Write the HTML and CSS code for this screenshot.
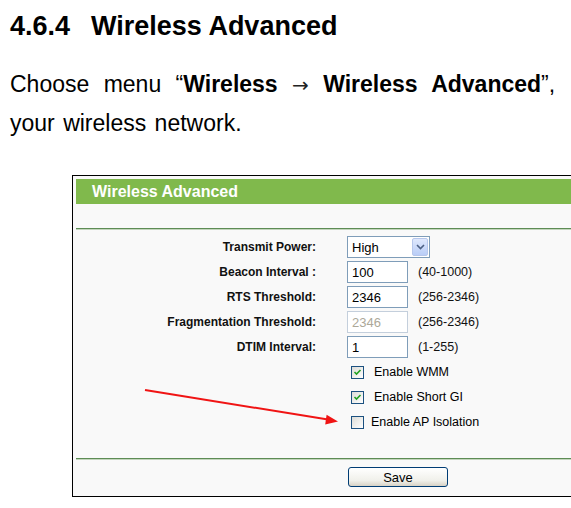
FILE: index.html
```html
<!DOCTYPE html>
<html lang="en">
<head>
    <meta charset="UTF-8">
    <meta name="viewport" content="width=device-width, initial-scale=1.0">
    <title>Wireless Advanced</title>
    <link rel="stylesheet" href="styles.css">
</head>
<body>
    <h1 class="section-title"><span class="section-num">4.6.4</span>Wireless Advanced</h1>

    <div class="intro">
        <div class="intro-line first">Choose menu “<b>Wireless</b> <span class="menu-arrow">→</span> <b>Wireless Advanced</b>”,</div>
        <div class="intro-line">your wireless network.</div>
    </div>

    <div class="shot">
        <div class="panel">
            <div class="panel-title">Wireless Advanced</div>
            <div class="panel-gap"></div>
            <div class="rule"></div>

            <div class="form">
                <div class="label">Transmit Power:</div>
                <div class="field">
                    <div class="fake-select">
                        <span class="fake-select-value">High</span>
                        <span class="fake-select-btn">
                            <svg width="9" height="6" viewBox="0 0 9 6"><path d="M1 1 L4.5 4.5 L8 1" fill="none" stroke="#4d6185" stroke-width="1.6"/></svg>
                        </span>
                    </div>
                </div>

                <div class="label">Beacon Interval :</div>
                <div class="field"><input class="txt" type="text" value="100"><span class="hint">(40-1000)</span></div>

                <div class="label">RTS Threshold:</div>
                <div class="field"><input class="txt" type="text" value="2346"><span class="hint">(256-2346)</span></div>

                <div class="label">Fragmentation Threshold:</div>
                <div class="field"><input class="txt" type="text" value="2346" disabled><span class="hint">(256-2346)</span></div>

                <div class="label">DTIM Interval:</div>
                <div class="field"><input class="txt" type="text" value="1"><span class="hint">(1-255)</span></div>

                <div class="label"></div>
                <div class="field check-field">
                    <span class="box checked"><svg width="9" height="8" viewBox="0 0 9 8"><path d="M1.5 4 L3.5 6 L7.5 2" fill="none" stroke="#21a121" stroke-width="1.6"/></svg></span>
                    <span class="check-text">Enable WMM</span>
                </div>

                <div class="label"></div>
                <div class="field check-field">
                    <span class="box checked"><svg width="9" height="8" viewBox="0 0 9 8"><path d="M1.5 4 L3.5 6 L7.5 2" fill="none" stroke="#21a121" stroke-width="1.6"/></svg></span>
                    <span class="check-text">Enable Short GI</span>
                </div>

                <div class="label"></div>
                <div class="field check-field">
                    <span class="box"></span>
                    <span class="check-text tight">Enable AP Isolation</span>
                </div>
            </div>

            <div class="rule bottom-rule"></div>
            <div class="actions">
                <button class="save-btn">Save</button>
            </div>
        </div>
    </div>

    <svg class="pointer" width="571" height="508" viewBox="0 0 571 508">
        <line x1="145" y1="390" x2="328" y2="419.5" stroke="#f01414" stroke-width="2"/>
        <polygon points="338,421.5 326.6,414.8 325.2,424.4" fill="#f01414"/>
    </svg>
</body>
</html>
```

FILE: styles.css
```css
body {
    margin: 0;
    padding: 0;
    background: #ffffff;
    color: #000000;
    font-family: "Liberation Sans", Arial, sans-serif;
    width: 571px;
    overflow: hidden;
    position: relative;
}

.section-title {
    margin: 11px 0 0 10px;
    font-size: 27px;
    line-height: 30px;
    font-weight: bold;
    white-space: nowrap;
}

.section-num {
    margin-right: 21px;
}

.intro {
    margin: 24px 0 0 10px;
    font-size: 23px;
    line-height: 38px;
    white-space: nowrap;
}

.intro-line {
    word-spacing: 2px;
}

.intro-line.first {
    word-spacing: 8px;
}

.menu-arrow {
    font-family: "DejaVu Sans", sans-serif;
    font-size: 20px;
    word-spacing: 0;
    color: #222;
}

.shot {
    margin: 33px 0 0 72px;
    border-left: 1px solid #000;
    border-top: 1px solid #000;
    border-bottom: 1px solid #000;
    width: 520px;
}

.panel {
    background: #f9f9f9;
    padding: 3px 0 9px 3px;
}

.panel-title {
    height: 25px;
    line-height: 25px;
    background: #80b94c;
    color: #ffffff;
    font-size: 16px;
    font-weight: bold;
    padding-left: 16px;
}

.panel-gap {
    height: 24px;
}

.rule {
    height: 1px;
    background: #5d8c55;
    border-bottom: 1px solid #c3d5bd;
}

.form {
    display: grid;
    grid-template-columns: 240px 1fr;
    column-gap: 31px;
    row-gap: 3px;
    grid-auto-rows: 22px;
    margin-top: 6px;
}

.label {
    text-align: right;
    font-size: 12px;
    font-weight: bold;
    line-height: 22px;
    white-space: nowrap;
    color: #111;
}

.field {
    display: flex;
    align-items: center;
    gap: 10px;
    font-size: 12.5px;
}

.fake-select {
    box-sizing: border-box;
    width: 83px;
    height: 22px;
    border: 1px solid #7f9db9;
    background: #fff;
    display: flex;
    align-items: center;
    justify-content: space-between;
    padding: 1px 1px 1px 4px;
}

.fake-select-value {
    font-size: 13px;
}

.fake-select-btn {
    width: 16px;
    height: 18px;
    border: 1px solid #b6c7ec;
    box-sizing: border-box;
    border-radius: 2px;
    background: linear-gradient(#dfe8fd, #b9cdf7);
    display: flex;
    align-items: center;
    justify-content: center;
}

.txt {
    box-sizing: border-box;
    width: 61px;
    height: 22px;
    margin: 0;
    border: 1px solid #7f9db9;
    background: #fff;
    font-family: "Liberation Sans", Arial, sans-serif;
    font-size: 13px;
    padding: 0 4px;
    color: #000;
}

.txt:disabled {
    color: #aca899;
    border-color: #c4cfdc;
    background: #fff;
}

.hint {
    color: #111;
}

.check-field {
    gap: 0;
    padding-left: 4px;
}

.box {
    box-sizing: border-box;
    width: 13px;
    height: 13px;
    border: 1px solid #1c5180;
    background: linear-gradient(135deg, #dcdcd7, #ffffff);
    display: flex;
    align-items: center;
    justify-content: center;
}

.check-text {
    margin-left: 10px;
    font-size: 12.5px;
}

.check-text.tight {
    margin-left: 7px;
}

.bottom-rule {
    margin-top: 25px;
}

.actions {
    display: grid;
    grid-template-columns: 240px 1fr;
    column-gap: 32px;
    margin-top: 7px;
}

.save-btn {
    grid-column: 2;
    width: 100px;
    height: 20px;
    margin: 0;
    padding: 0;
    border: 1px solid #003c74;
    border-radius: 3px;
    background: linear-gradient(#ffffff, #f0f0ea 70%, #d8d2c6);
    font-family: "Liberation Sans", Arial, sans-serif;
    font-size: 13px;
    color: #000;
}

.pointer {
    position: absolute;
    left: 0;
    top: 0;
    pointer-events: none;
}
```
